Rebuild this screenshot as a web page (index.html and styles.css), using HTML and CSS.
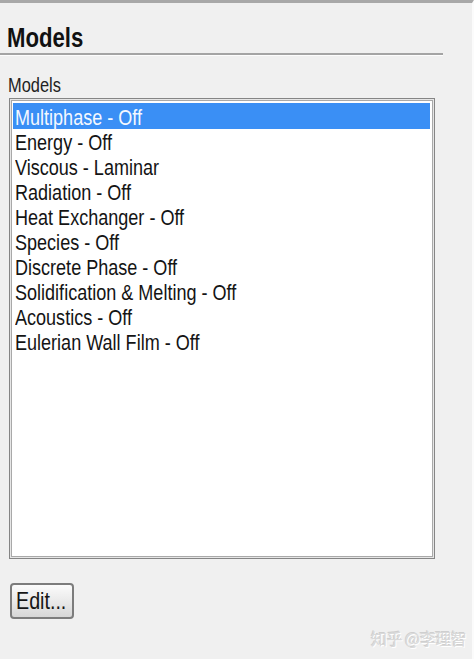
FILE: index.html
```html
<!DOCTYPE html>
<html>
<head>
<meta charset="utf-8">
<link rel="stylesheet" href="styles.css">
</head>
<body>
<div class="page">
  <div class="panel-head">
    <h1 class="title"><span class="narrow">Models</span></h1>
  </div>
  <div class="group-label"><span class="narrow">Models</span></div>
  <div class="listbox">
    <div class="item selected"><span class="narrow">Multiphase - Off</span></div>
    <div class="item"><span class="narrow">Energy - Off</span></div>
    <div class="item"><span class="narrow">Viscous - Laminar</span></div>
    <div class="item"><span class="narrow">Radiation - Off</span></div>
    <div class="item"><span class="narrow">Heat Exchanger - Off</span></div>
    <div class="item"><span class="narrow">Species - Off</span></div>
    <div class="item"><span class="narrow">Discrete Phase - Off</span></div>
    <div class="item"><span class="narrow">Solidification &amp; Melting - Off</span></div>
    <div class="item"><span class="narrow">Acoustics - Off</span></div>
    <div class="item"><span class="narrow">Eulerian Wall Film - Off</span></div>
  </div>
  <div class="actions">
    <button class="btn"><span class="narrow">Edit...</span></button>
  </div>
  <div class="watermark">知乎 @李理智</div>
</div>
</body>
</html>
```
FILE: styles.css
```css
html, body {
  margin: 0;
  padding: 0;
  background: #f0f0f0;
}
.page {
  position: relative;
  box-sizing: border-box;
  width: 474px;
  height: 659px;
  border-top: 3px solid #a8a8a8;
  border-right: 2px solid #fbfbfb;
  font-family: "Liberation Sans", Arial, sans-serif;
  color: #111;
  overflow: hidden;
}
.narrow {
  display: inline-block;
  transform: scaleX(0.82);
  transform-origin: 0 50%;
  white-space: nowrap;
}
.panel-head {
  width: 443px;
  margin-top: 20px;
  border-bottom: 2px solid #a4a4a4;
  box-shadow: 0 1px 0 #fdfdfd;
}
.title {
  margin: 0;
  padding-left: 7px;
  font-size: 27px;
  line-height: 30px;
  font-weight: bold;
  color: #111;
}
.group-label {
  margin-top: 19px;
  padding-left: 8px;
  font-size: 20px;
  line-height: 22px;
  color: #222;
}
.listbox {
  box-sizing: border-box;
  margin: 2px 0 0 9px;
  width: 426px;
  height: 461px;
  padding: 4px 4px 4px 3px;
  background: #fff;
  border: 1px solid #858585;
  box-shadow: inset 0 0 0 1px #e6e6e6, inset 0 0 0 2px #a9a9a9;
}
.item {
  height: 25px;
  line-height: 29px;
  padding-left: 2px;
  font-size: 22px;
  white-space: nowrap;
  color: #141414;
}
.item.selected {
  height: 26px;
  margin-bottom: -1px;
  background: #3a8ff5;
  color: #f4f8ff;
}
.actions {
  margin-top: 24px;
  padding-left: 10px;
}
.btn {
  box-sizing: border-box;
  width: 64px;
  height: 36px;
  padding: 0 0 0 4px;
  text-align: left;
  border: 2px solid #7c7c7c;
  border-radius: 4px;
  background: linear-gradient(#fbfbfb, #e8e8e8 55%, #d6d6d6);
  font-family: "Liberation Sans", Arial, sans-serif;
  font-size: 24px;
  line-height: 32px;
  color: #151515;
}
.watermark {
  position: absolute;
  left: 371px;
  top: 623px;
  font-family: "Noto Sans CJK SC", sans-serif;
  font-size: 16px;
  line-height: 24px;
  letter-spacing: -0.5px;
  color: #d9d9d9;
  text-shadow: 1px 1px 0 #ffffff, -1px -1px 0 #cfcfcf;
  white-space: nowrap;
}
```
